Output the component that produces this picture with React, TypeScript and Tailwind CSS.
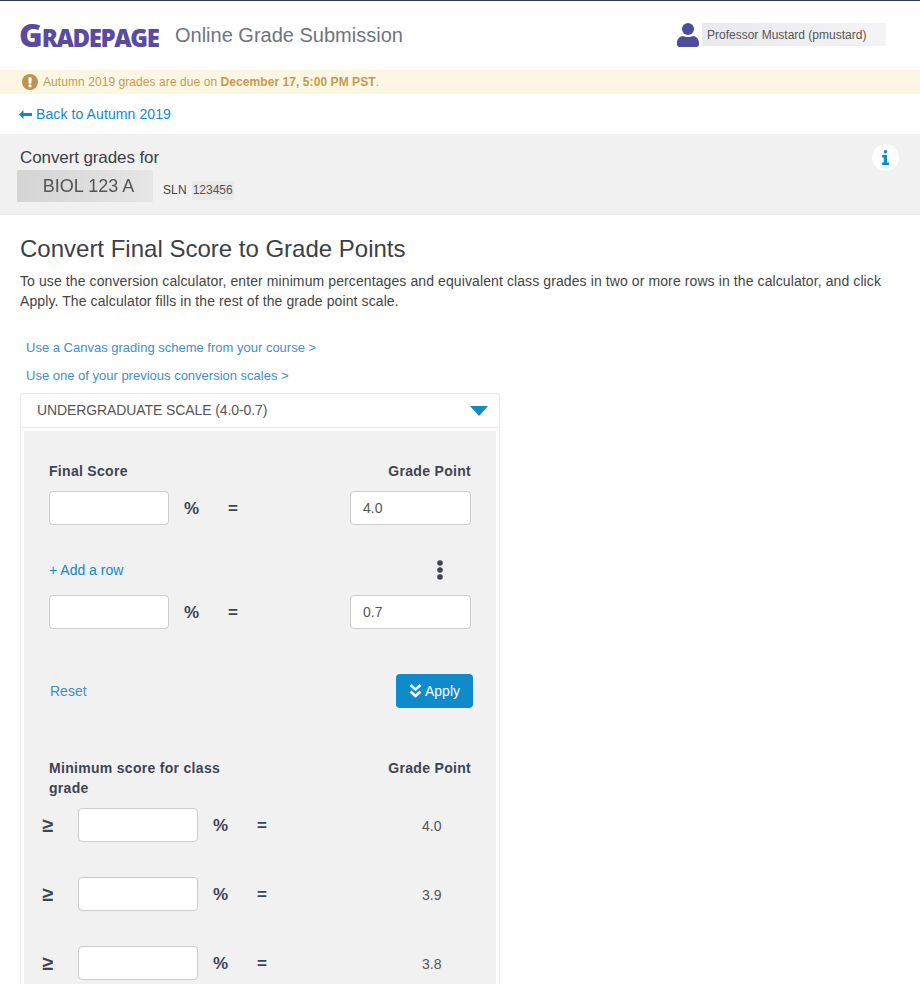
const sans = "font-['Liberation_Sans',Arial,sans-serif]";

function ScoreInput({ value, wide }: { value?: string; wide?: boolean }) {
  return (
    <input
      className={`h-[34px] rounded-[4px] border border-[#ccc] bg-white px-3 text-[14px] text-[#555] outline-none ${wide ? "w-[121px]" : "w-[120px]"}`}
      defaultValue={value}
      type="text"
    />
  );
}

function Symbols() {
  return (
    <>
      <span className="ml-[15px] w-[16px] text-[17px] font-bold leading-none text-[#3f4452]">%</span>
      <span className="ml-[28px] w-[12px] text-[17px] font-bold leading-none text-[#3f4452]">=</span>
    </>
  );
}

function ScaleRow({ point }: { point: string }) {
  return (
    <div className="flex h-[34px] items-center">
      <span className="ml-[18px] w-[12px] text-center text-[20px] font-bold leading-none text-[#3f4452]">≥</span>
      <span className="ml-[24px]">
        <ScoreInput />
      </span>
      <Symbols />
      <span className="ml-[153px] pt-[2px] text-[14px] text-[#555]">{point}</span>
    </div>
  );
}

export default function App() {
  return (
    <div className={`h-[984px] overflow-hidden border-t border-[#363c4c] bg-white text-[14px] text-[#333] ${sans}`}>
      <header className="relative flex h-[69px] items-center pb-[2px] pl-[19px]">
        <div className="flex w-[142px] items-baseline font-['Open_Sans',sans-serif] font-extrabold leading-none text-[#5a4b9e]">
          <span className="text-[32px] tracking-[-1px]">G</span>
          <span className="text-[24px] tracking-[-1.4px]">RADEPAGE</span>
        </div>
        <span className="ml-[14px] text-[20px] text-[#6f7480]">Online Grade Submission</span>
        <div className="ml-auto mr-[34px] flex items-center">
          <svg className="mr-[3px]" fill="#524a9e" height="24" viewBox="0 0 22 24" width="22">
            <circle cx="11" cy="6" r="6" />
            <path d="M0 20c0-4 3-7 6-7 1.500.7 3 1 5 1s3.500-.3 5-1c3 0 6 3 6 7v1.500c0 1.500-1 2.500-2.500 2.500h-17C1 24 0 23 0 21.500z" />
          </svg>
          <span className="flex h-[23px] w-[184px] items-center bg-gradient-to-r from-[#e9e9ee] to-[#f4f4f6] pl-[5px] text-[12px] text-[#555]">
            Professor Mustard (pmustard)
          </span>
        </div>
      </header>

      <div className="flex h-[24px] items-center bg-[#fcf6e3] pl-[22px] text-[12px] tracking-[0.07px] text-[#c49a54]">
        <svg className="mr-[5px]" height="16" viewBox="0 0 16 16" width="16">
          <circle cx="8" cy="8" fill="#bd9350" r="8" />
          <rect fill="#fff" height="6.500" rx="1" width="3" x="6.500" y="3.200" />
          <circle cx="8" cy="11.800" fill="#fff" r="1.600" />
        </svg>
        <span>
          Autumn 2019 grades are due on <strong>December 17, 5:00 PM PST</strong>.
        </span>
      </div>

      <a className="flex h-[40px] items-center pl-[19px] text-[14px] tracking-[0.1px] text-[#0f8acb]" href="#">
        <svg className="mr-[4px]" fill="#0f8acb" height="9" viewBox="0 0 13 9" width="13">
          <path d="M0 4.500 4.500 0v3H13v3H4.500v3z" />
        </svg>
        Back to Autumn 2019
      </a>

      <section className="relative h-[81px] border-b border-[#ececec] bg-[#f1f1f1] pl-[20px] pt-[14px]">
        <div className="text-[17px] leading-[20px] tracking-[-0.1px] text-[#3b3f4a]">Convert grades for</div>
        <div className="-ml-[3px] mt-[2px] flex items-end">
          <span className="flex h-[32px] w-[136px] items-center justify-center rounded-[2px] bg-gradient-to-r from-[#d4d4d4] via-[#dddddd] to-[#e6e6e6] pl-[7px] text-[18px] text-[#555] blur-[0.4px]">
            BIOL 123 A
          </span>
          <span className="mb-[3px] ml-[10px] text-[12px] tracking-[0.1px] text-[#444]">SLN</span>
          <span className="mb-[2px] ml-[5px] bg-[#e9e9e9] px-[1px] text-[12px] leading-[19px] text-[#555]">123456</span>
        </div>
        <span className="absolute right-[21px] top-[10px] flex h-[27px] w-[27px] items-center justify-center rounded-full bg-white">
          <svg fill="#0f8acb" height="15" viewBox="0 0 7 15" width="7">
            <circle cx="3.500" cy="1.800" r="1.800" />
            <path d="M0 5h5v7.500h2V15H0v-2.500h1.800V7.500H0z" />
          </svg>
        </span>
      </section>

      <main className="px-[20px]">
        <h1 className="mt-[20px] text-[24px] font-normal leading-[28px] text-[#3b3f4a]">Convert Final Score to Grade Points</h1>
        <p className="mt-[8px] text-[14px] leading-[20px] tracking-[0.1px] text-[#444]">
          To use the conversion calculator, enter minimum percentages and equivalent class grades in two or more rows in the calculator, and click Apply. The calculator fills in the rest of the grade point scale.
        </p>

        <div className="ml-[6px] mt-[28px] text-[13px] leading-[18px] text-[#3f8fc9]">
          <a className="block" href="#">Use a Canvas grading scheme from your course &gt;</a>
          <a className="mt-[10px] block" href="#">Use one of your previous conversion scales &gt;</a>
        </div>

        <div className="mt-[8px] w-[480px] rounded-t-[3px] border border-b-0 border-[#eaeaea]">
          <div className="flex h-[34px] items-center justify-between border-b border-[#eee] pl-[16px] pr-[11px] text-[14px] tracking-[-0.1px] text-[#555]">
            <span>UNDERGRADUATE SCALE (4.0-0.7)</span>
            <svg fill="#0f8acb" height="10" viewBox="0 0 18 10" width="18">
              <path d="M0 0h18l-9 10z" />
            </svg>
          </div>

          <div className="mx-[3px] mt-[3px] h-[560px] bg-[#f1f1f1] pl-[25px] pr-[25px] pt-[32px]">
            <div className="flex justify-between text-[14px] font-bold leading-[16px] tracking-[0.3px] text-[#3f4452]">
              <span>Final Score</span>
              <span>Grade Point</span>
            </div>
            <div className="mt-[12px] flex h-[34px] items-center">
              <ScoreInput />
              <Symbols />
              <span className="ml-auto">
                <ScoreInput value="4.0" wide />
              </span>
            </div>
            <div className="mt-[33px] flex h-[24px] items-center justify-between pr-[28px]">
              <a className="text-[14px] text-[#0f8acb]" href="#">+ Add a row</a>
              <svg fill="#3f4452" height="20" viewBox="0 0 6 20" width="6">
                <circle cx="3" cy="3" r="2.800" />
                <circle cx="3" cy="10" r="2.800" />
                <circle cx="3" cy="17" r="2.800" />
              </svg>
            </div>
            <div className="mt-[13px] flex h-[34px] items-center">
              <ScoreInput />
              <Symbols />
              <span className="ml-auto">
                <ScoreInput value="0.7" wide />
              </span>
            </div>

            <div className="mt-[45px] flex items-center justify-between">
              <a className="ml-[1px] text-[14px] text-[#3f8fc9]" href="#">Reset</a>
              <button className="-mr-[2px] flex h-[34px] w-[77px] items-center justify-center rounded-[4px] bg-[#0f8acb] text-[14px] text-white" type="button">
                <svg className="mr-[3px]" fill="none" height="14" stroke="#fff" strokeWidth="2.600" viewBox="0 0 13 14" width="13">
                  <path d="M1.500 1 6.500 5.500 11.500 1M1.500 7.500l5 4.500 5-4.500" />
                </svg>
                Apply
              </button>
            </div>

            <div className="mt-[50px] flex items-start justify-between text-[14px] font-bold leading-[20px] tracking-[0.3px] text-[#3f4452]">
              <span className="w-[190px]">Minimum score for class grade</span>
              <span>Grade Point</span>
            </div>
            <div className="-ml-[25px] mt-[10px] flex flex-col gap-[35px]">
              <ScaleRow point="4.0" />
              <ScaleRow point="3.9" />
              <ScaleRow point="3.8" />
            </div>
          </div>
        </div>
      </main>
    </div>
  );
}
